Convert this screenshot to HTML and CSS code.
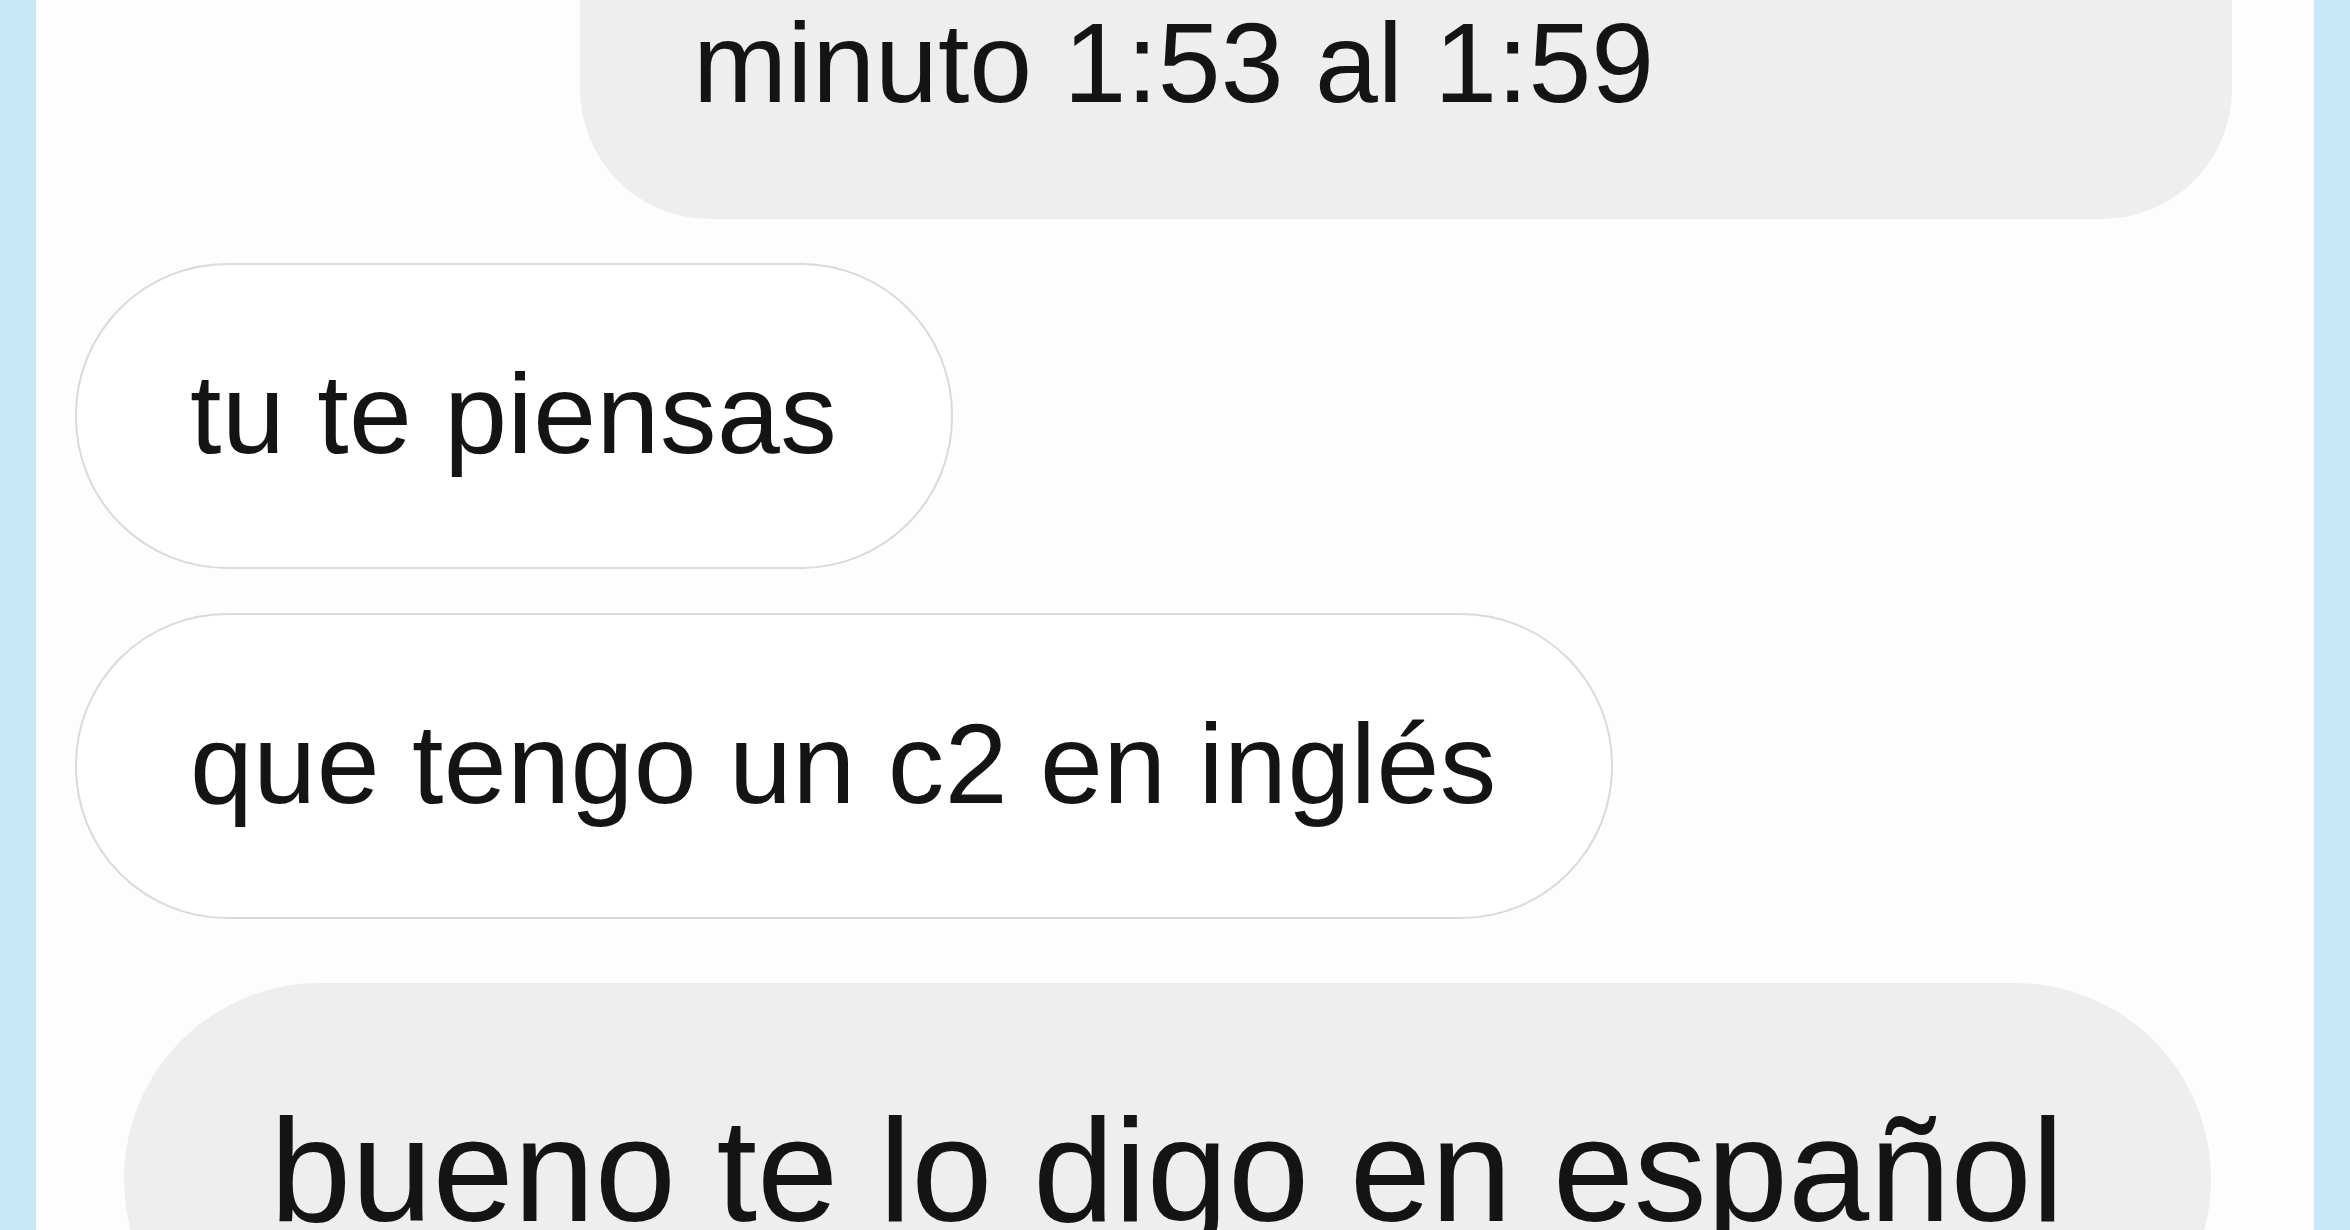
FILE: index.html
```html
<!DOCTYPE html>
<html lang="es">
<head>
<meta charset="utf-8">
<title>Chat</title>
<link rel="stylesheet" href="styles.css">
</head>
<body>
<div class="frame">
  <main class="chat">
    <div class="bubble gray first">minuto 1:53 al 1:59</div>
    <div class="bubble outline">tu te piensas</div>
    <div class="bubble outline">que tengo un c2 en inglés</div>
    <div class="bubble gray big">bueno te lo digo en español</div>
  </main>
</div>
</body>
</html>
```
FILE: styles.css
```css
html, body {
  margin: 0;
  padding: 0;
  height: 100%;
}
body {
  background: #c8e8fa;
  overflow: hidden;
}
.frame {
  margin: 0 36px;
  height: 1230px;
  background: #fdfdfd;
  overflow: hidden;
}
.chat {
  display: flex;
  flex-direction: column;
  align-items: flex-start;
  font-family: "Liberation Sans", Arial, Helvetica, sans-serif;
  color: #141414;
  font-size: 113px;
  line-height: 130px;
}
.bubble {
  box-sizing: border-box;
  white-space: nowrap;
}
.gray {
  background: #eeeeee;
}
.first {
  align-self: flex-end;
  width: 1652px;
  margin-top: -400px;
  margin-right: 82px;
  padding: 398px 113px 91px;
  border-radius: 130px;
}
.outline {
  margin-left: 39px;
  margin-top: 44px;
  background: #ffffff;
  border: 2px solid #dadada;
  border-radius: 152px;
  padding: 84px 114px 88px 113px;
  letter-spacing: 0.5px;
}
.big {
  margin-top: 64px;
  margin-left: 88px;
  width: 2087px;
  font-size: 146px;
  line-height: 168px;
  padding: 104px 146px 120px;
  border-radius: 200px;
}
```
